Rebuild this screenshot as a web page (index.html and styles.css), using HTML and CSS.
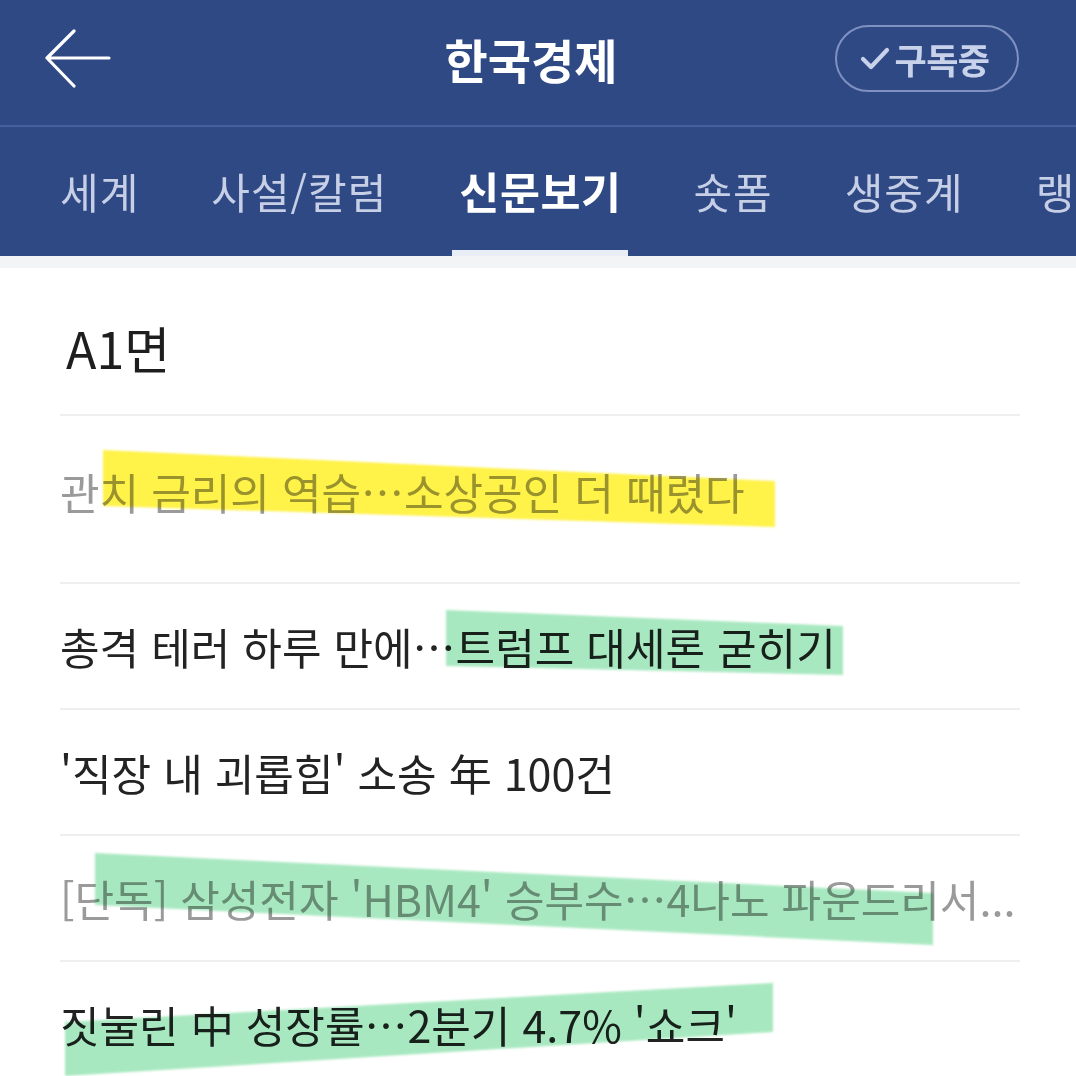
FILE: index.html
```html
<!DOCTYPE html>
<html lang="ko">
<head>
<meta charset="utf-8">
<title>한국경제</title>
<link rel="stylesheet" href="styles.css">
</head>
<body>
<div class="page">
  <header class="appbar">
    <div class="topbar">
      <div class="left">
        <button class="back" aria-label="뒤로">
          <svg width="70" height="64" viewBox="0 0 70 64"><path d="M4 29 H66 M31 2 L4 29 L31 57" fill="none" stroke="#ffffff" stroke-width="3.2" stroke-linecap="round" stroke-linejoin="round"/></svg>
        </button>
      </div>
      <h1 class="title">한국경제</h1>
      <div class="right">
        <div class="subscribe">
          <svg class="check" width="30" height="26" viewBox="0 0 30 26"><path d="M3 13 L11 21 L27 4" fill="none" stroke="#c8d2ea" stroke-width="4.2" stroke-linecap="round" stroke-linejoin="round"/></svg>
          <span>구독중</span>
        </div>
      </div>
    </div>
    <nav class="tabs">
      <span class="tab">세계</span>
      <span class="tab">사설/칼럼</span>
      <span class="tab active">신문보기</span>
      <span class="tab">숏폼</span>
      <span class="tab">생중계</span>
      <span class="tab">랭킹</span>
    </nav>
  </header>
  <div class="strip"></div>
  <main class="list">
    <div class="section">A1면</div>
    <div class="row first read">관치 금리의 역습…소상공인 더 때렸다</div>
    <div class="row">총격 테러 하루 만에…트럼프 대세론 굳히기</div>
    <div class="row">'직장 내 괴롭힘' 소송 年 100건</div>
    <div class="row read">[단독] 삼성전자 'HBM4' 승부수…4나노 파운드리서...</div>
    <div class="row">짓눌린 中 성장률…2분기 4.7% '쇼크'</div>
  </main>
  <svg class="marks" width="1076" height="1076" viewBox="0 0 1076 1076">
    <defs><filter id="soft"><feGaussianBlur stdDeviation="1.2"/></filter></defs>
    <polygon points="103,450 775,481 775,527 103,506" fill="#fff24a" filter="url(#soft)"/>
    <polygon points="446,610 843,626 843,675 446,666" fill="#a8e8c0" filter="url(#soft)"/>
    <polygon points="95,853 933,893 933,945 95,905" fill="#a8e8c0" filter="url(#soft)"/>
    <polygon points="65,1022 773,983 773,1032 65,1076" fill="#a8e8c0" filter="url(#soft)"/>
  </svg>
</div>
</body>
</html>
```

FILE: styles.css
```css
* { box-sizing: border-box; }
html, body { margin: 0; padding: 0; background: #ffffff; }
body {
  font-family: "Noto Sans CJK KR", "Noto Sans", sans-serif;
  width: 1076px;
  height: 1076px;
  overflow: hidden;
}
.page { position: relative; width: 1076px; height: 1076px; overflow: hidden; }

.appbar { background: #2f4985; }
.topbar {
  height: 127px;
  display: grid;
  grid-template-columns: 1fr auto 1fr;
  align-items: center;
  padding: 0 57px 9px 43px;
  border-bottom: 2px solid #43609c;
}
.left { display: flex; }
.right { display: flex; justify-content: flex-end; }
.back {
  width: 70px; height: 64px; padding: 0; margin: 6px 0 0;
  background: none; border: 0; display: flex;
}
.title {
  margin: 0;
  text-align: center;
  color: #ffffff;
  font-size: 47px;
  font-weight: 700;
  letter-spacing: 0;
  line-height: 1;
}
.subscribe {
  width: 184px; height: 67px;
  border: 2px solid #7f91c0;
  border-radius: 34px;
  display: flex; align-items: center; justify-content: center;
  gap: 4px;
  color: #c8d2ea;
  font-size: 35px;
  font-weight: 700;
  letter-spacing: -0.5px;
  padding-right: 4px;
}
.check { margin-top: 2px; }

.tabs {
  height: 129px;
  display: flex;
  align-items: stretch;
  gap: 58px;
  padding-left: 53px;
  white-space: nowrap;
  overflow: hidden;
}
.tab {
  display: flex; align-items: center;
  padding: 4px 7px 0;
  color: #c6cfe6;
  font-size: 42px;
  letter-spacing: 1px;
  border-bottom: 6px solid transparent;
}
.tab.active {
  color: #ffffff;
  font-weight: 700;
  font-size: 43.5px;
  letter-spacing: 0.5px;
  border-bottom-color: #e9edf6;
}
.strip { height: 12px; background: #f3f4f6; }

.list { padding: 0 56px 0 60px; }
.section {
  height: 146px;
  padding: 54px 0 0 6px;
  font-size: 50px;
  line-height: 50px;
  color: #1e1e1e;
}
.row {
  height: 126px;
  border-top: 2px solid #efefef;
  font-size: 43px;
  letter-spacing: 0;
  color: #232323;
  white-space: nowrap;
  line-height: 124px;
}
.row.first { height: 168px; line-height: 150px; }
.row.read { color: #9a9a9a; }

.marks {
  position: absolute;
  left: 0; top: 0;
  pointer-events: none;
  mix-blend-mode: multiply;
}
```
